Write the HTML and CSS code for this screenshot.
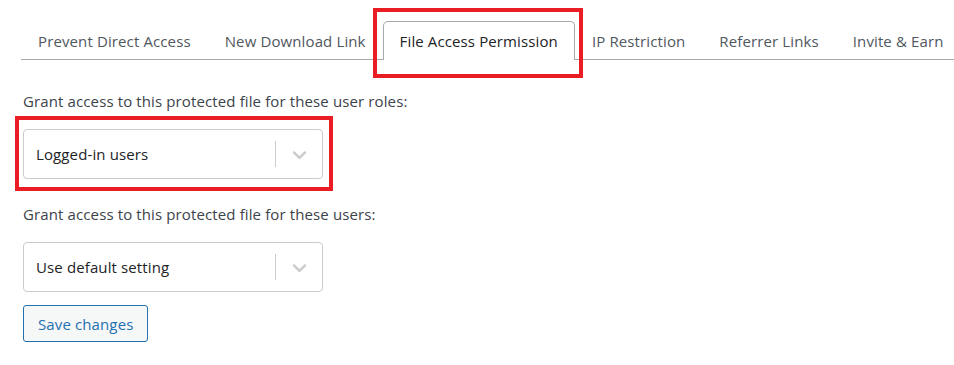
FILE: index.html
```html
<!DOCTYPE html>
<html lang="en">
<head>
    <meta charset="UTF-8" />
    <meta name="viewport" content="width=device-width, initial-scale=1.0"/>
    <title>File Access Permission</title>
    <link rel="stylesheet" href="styles.css">
</head>
<body>

    <div class="wrap">
        <nav class="tab-bar">
            <a href="#" class="tab">Prevent Direct Access</a>
            <a href="#" class="tab">New Download Link</a>
            <a href="#" class="tab active marked">File Access Permission</a>
            <a href="#" class="tab">IP Restriction</a>
            <a href="#" class="tab">Referrer Links</a>
            <a href="#" class="tab">Invite &amp; Earn</a>
        </nav>

        <div class="panel">
            <p class="field-label first">Grant access to this protected file for these user roles:</p>
            <div class="select marked">
                <span class="select-value">Logged-in users</span>
                <span class="select-sep"></span>
                <span class="select-arrow">
                    <svg viewBox="0 0 20 20" aria-hidden="true">
                        <path d="M4.516 7.548c0.436-0.446 1.043-0.481 1.576 0l3.908 3.747 3.908-3.747c0.533-0.481 1.141-0.446 1.574 0 0.436 0.445 0.408 1.197 0 1.615-0.406 0.418-4.695 4.502-4.695 4.502-0.217 0.223-0.502 0.335-0.787 0.335s-0.57-0.112-0.789-0.335c0 0-4.287-4.084-4.695-4.502s-0.436-1.17 0-1.615z"/>
                    </svg>
                </span>
            </div>

            <p class="field-label">Grant access to this protected file for these users:</p>
            <div class="select">
                <span class="select-value">Use default setting</span>
                <span class="select-sep"></span>
                <span class="select-arrow">
                    <svg viewBox="0 0 20 20" aria-hidden="true">
                        <path d="M4.516 7.548c0.436-0.446 1.043-0.481 1.576 0l3.908 3.747 3.908-3.747c0.533-0.481 1.141-0.446 1.574 0 0.436 0.445 0.408 1.197 0 1.615-0.406 0.418-4.695 4.502-4.695 4.502-0.217 0.223-0.502 0.335-0.787 0.335s-0.57-0.112-0.789-0.335c0 0-4.287-4.084-4.695-4.502s-0.436-1.17 0-1.615z"/>
                    </svg>
                </span>
            </div>

            <button class="btn-save" type="button">Save changes</button>
        </div>
    </div>

</body>
</html>
```

FILE: styles.css
```css
* {
    margin: 0;
    padding: 0;
    box-sizing: border-box;
}

body {
    font-family: 'Open Sans', 'Noto Sans', sans-serif;
    font-size: 15px;
    letter-spacing: 0.12px;
    background-color: #fff;
    color: #3c434a;
}

.wrap {
    padding-left: 21px;
}

.tab-bar {
    display: flex;
    padding-top: 21px;
    border-bottom: 1px solid #a7aaad;
}

.tab {
    display: block;
    padding: 8px 16px 7px;
    line-height: 22px;
    border: 1px solid transparent;
    border-bottom: none;
    margin-bottom: -1px;
    color: #50575e;
    text-decoration: none;
    white-space: nowrap;
}

.tab.active {
    color: #1d2327;
    background-color: #fff;
    border-color: #a7aaad;
    border-radius: 5px 5px 0 0;
    padding-bottom: 8px;
}

/* red annotation boxes */
.marked {
    position: relative;
}

.tab.marked::after {
    content: "";
    position: absolute;
    top: -14px;
    left: -11px;
    right: -9px;
    bottom: -18px;
    border: 4px solid #ea1c24;
}

.select.marked::after {
    content: "";
    position: absolute;
    top: -14px;
    left: -9px;
    right: -11px;
    bottom: -13px;
    border: 4px solid #ea1c24;
}

.panel {
    padding-left: 2px;
}

.field-label {
    line-height: 22px;
    margin-top: 24px;
    margin-bottom: 17px;
}

.field-label.first {
    margin-top: 30px;
}

.select {
    display: flex;
    align-items: center;
    width: 300px;
    height: 50px;
    border: 1px solid #ccc;
    border-radius: 4px;
    background-color: #fff;
}

.select-value {
    flex: 1;
    padding-left: 12px;
    color: #1d2327;
}

.select-sep {
    width: 1px;
    height: 26px;
    background-color: #ccc;
}

.select-arrow {
    display: flex;
    align-items: center;
    justify-content: center;
    width: 46px;
}

.select-arrow svg {
    width: 23px;
    height: 23px;
    fill: #ccc;
}

.btn-save {
    margin-top: 13px;
    height: 37px;
    padding: 0 14px;
    font-family: inherit;
    font-size: 15px;
    letter-spacing: 0.12px;
    color: #2271b1;
    background-color: #f6f7f7;
    border: 1px solid #2271b1;
    border-radius: 3px;
    cursor: pointer;
}
```
